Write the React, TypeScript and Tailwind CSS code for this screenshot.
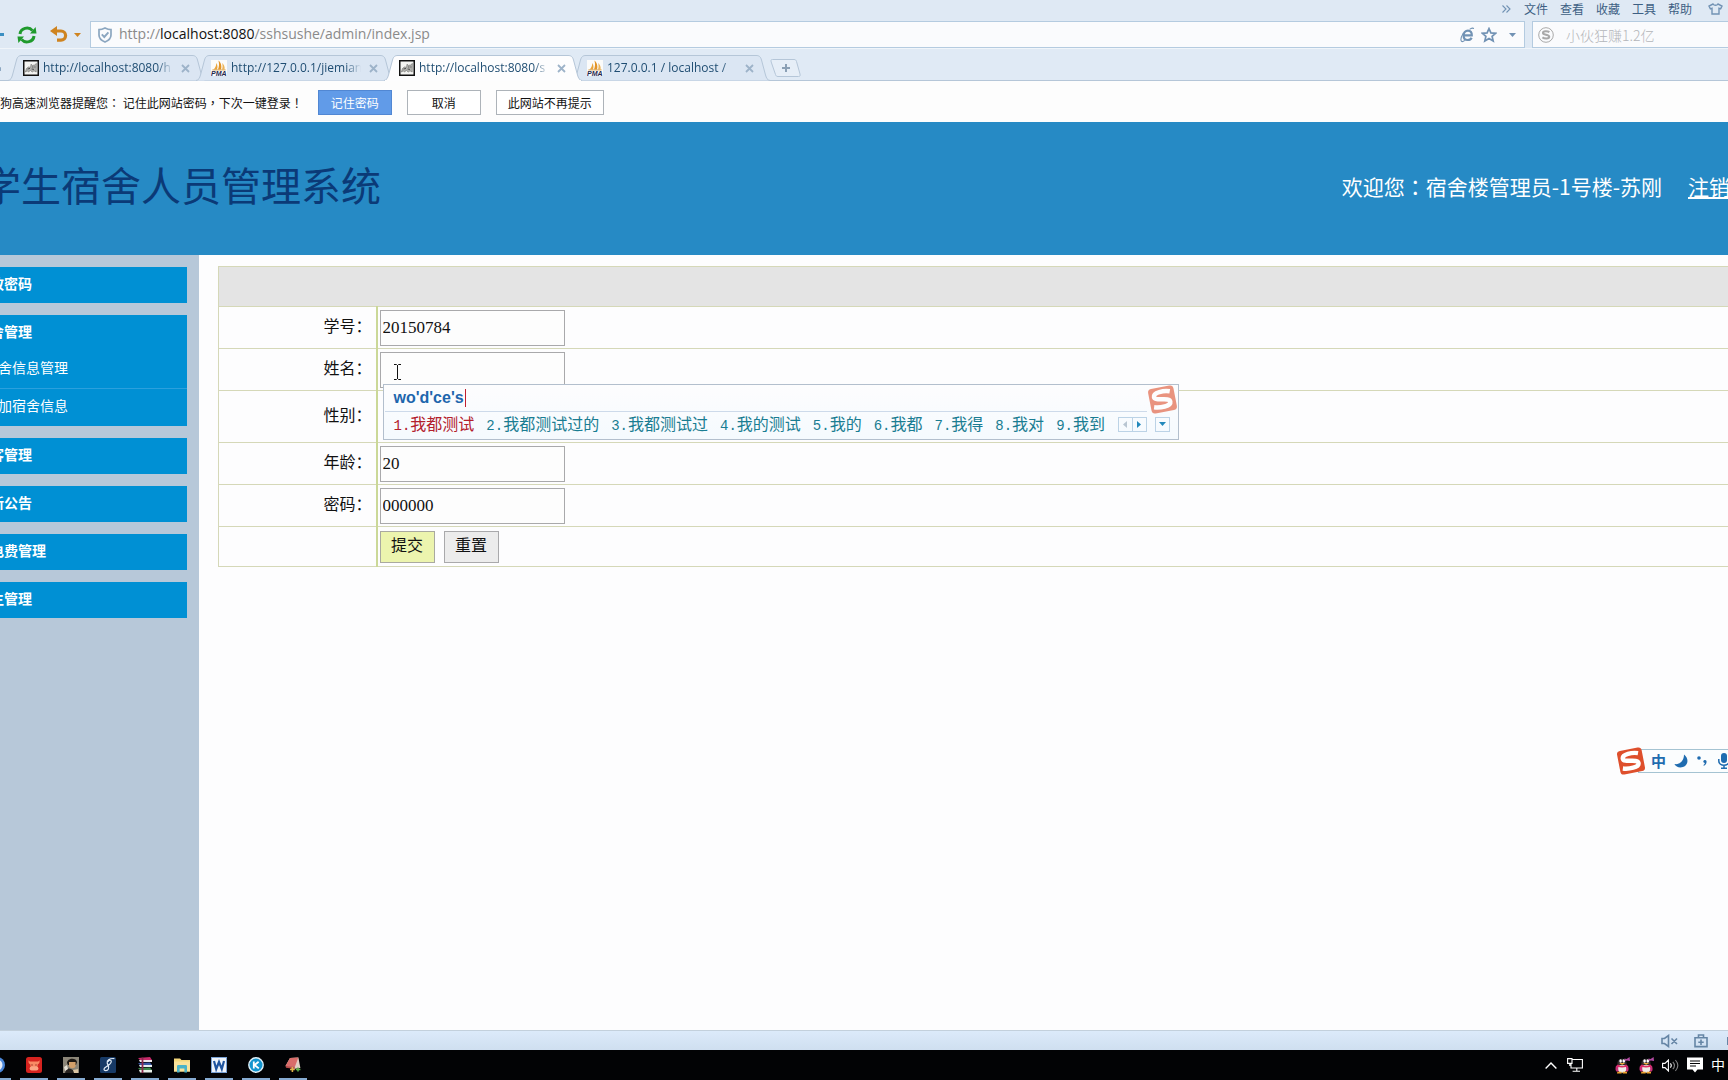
import React from "react";

const SANS = "font-['Open_Sans','Noto_Sans_CJK_SC',sans-serif]";
const CJK = "font-['Noto_Sans_CJK_SC',sans-serif]";

/* Full-width punctuation centred in its square */
const Mid = ({ children }: { children: React.ReactNode }) => (
  <span className="font-['Noto_Sans_CJK_TC',sans-serif]">{children}</span>
);

/* ---------- icons ---------- */

const RefreshIcon = () => (
  <svg width="20" height="18" viewBox="0 0 20 18" fill="none" stroke="#1f9a2c" strokeWidth="3">
    <path d="M3 8 A7 6.5 0 0 1 15.5 4.6" />
    <path d="M17 10 A7 6.5 0 0 1 4.5 13.4" />
    <path d="M13 7.6 L19.5 7.6 L18.6 1 Z" fill="#1f9a2c" stroke="none" />
    <path d="M7 10.4 L0.5 10.4 L1.4 17 Z" fill="#1f9a2c" stroke="none" />
  </svg>
);

const UndoIcon = () => (
  <svg width="18" height="17" viewBox="0 0 18 17" fill="none">
    <path d="M5 5 H11 A4.5 4.5 0 0 1 11 14.2 H7" stroke="#cf8420" strokeWidth="3.2" />
    <path d="M0 5 L7 0 V10 Z" fill="#cf8420" />
  </svg>
);

const ShieldIcon = () => (
  <svg width="14" height="16" viewBox="0 0 14 16" fill="none" stroke="#8ba6c0" strokeWidth="1.7">
    <path d="M7 1 C9 2 11 2.6 13 2.6 V8 C13 11.5 10.5 13.6 7 15 C3.5 13.6 1 11.5 1 8 V2.6 C3 2.6 5 2 7 1 Z" />
    <path d="M3.8 7.4 L6.3 10 L10.4 5.4" strokeWidth="1.9" />
  </svg>
);

const IeIcon = () => (
  <svg width="15" height="16" viewBox="0 0 15 16" fill="none" stroke="#7192b4">
    <path d="M3.6 8.4 H11.8 C12 5.2 10.2 3.6 8 3.6 C5.4 3.6 3.6 5.8 3.6 8.4 C3.6 11.4 5.4 13 7.6 13 C9.6 13 11 12.2 11.6 10.8" strokeWidth="2.2" />
    <path d="M3.4 6 C1.6 9 0.4 12.8 1.4 14.2 C2.1 15 3.6 14.4 4.8 13.4 M9.6 2.4 C11.6 1 13.4 0.6 13.6 2" strokeWidth="1.1" />
  </svg>
);

const StarIcon = () => (
  <svg width="16" height="16" viewBox="0 0 16 16" fill="none" stroke="#7192b4" strokeWidth="1.7" strokeLinejoin="miter">
    <path d="M8 1.6 L9.9 5.9 L14.6 6.3 L11.1 9.4 L12.2 14.1 L8 11.6 L3.8 14.1 L4.9 9.4 L1.4 6.3 L6.1 5.9 Z" />
  </svg>
);

const Caret = ({ className }: { className: string }) => (
  <svg width="7" height="4" viewBox="0 0 7 4" className={className} fill="currentColor">
    <path d="M0 0 H7 L3.5 4 Z" />
  </svg>
);

const SearchLogo = () => (
  <svg width="16" height="16" viewBox="0 0 16 16" fill="none" stroke="#a9a9a9">
    <circle cx="8" cy="8" r="7.3" strokeWidth="1" />
    <path d="M11.4 5.2 C9.6 4 5 3.8 5 6 C5 8.2 11.2 7.4 11.2 9.8 C11.2 12 6.4 11.8 4.4 10.4" strokeWidth="2.1" />
  </svg>
);

const ShirtIcon = () => (
  <svg width="15" height="12" viewBox="0 0 15 12" fill="none" stroke="#7192b4" strokeWidth="1.4">
    <path d="M5 1 C6 2.6 9 2.6 10 1 L14 3 L12.6 5.8 L11 5.2 V11 H4 V5.2 L2.4 5.8 L1 3 Z" />
  </svg>
);

const CatIcon = () => (
  <svg width="16" height="16" viewBox="0 0 16 16">
    <rect x="0.75" y="0.75" width="14.5" height="14.5" fill="#f4f4f2" stroke="#111" strokeWidth="1.5" />
    <path d="M2.4 12 L3.4 8.6 L5.4 7 L7.6 7.4 L8 4.2 L9.4 5.4 L11.6 5 L13.4 3.4 L13.2 12 L11 10.8 L9.2 12 L7.4 10.4 L5.4 12 L4.4 10.8 Z" fill="#b3b3b0" stroke="#6d6d6a" strokeWidth="0.6" />
    <path d="M4.6 9 L7 8.4 M9.2 7 H10.4 M11.4 7 H12.4 M8.6 9 L11 9.4" stroke="#333" strokeWidth="0.8" />
  </svg>
);

const PmaIcon = () => (
  <svg width="16" height="17" viewBox="0 0 16 17">
    <rect width="16" height="16" fill="#fbfbfa" />
    <path d="M2.6 9.4 C4.2 8 5.2 5.6 5.4 3 C6.6 5 6.8 7.4 6 9.4 Z" fill="#e9a43a" />
    <path d="M7 9.4 C8.2 7 8.4 3.4 7.4 0.6 C10 2.4 11 6.4 10 9.4 Z" fill="#e39426" />
    <path d="M11 9.4 C11.8 7.4 11.8 5 11 3 C13 4.4 14 7 13.6 9.4 Z" fill="#edb458" />
    <path d="M1.4 9.9 H14.6" stroke="#d99b3c" strokeWidth="0.9" />
    <text x="0" y="16.4" fontSize="7" fontWeight="700" fontStyle="italic" fontFamily="Liberation Sans" fill="#1f2750">PMA</text>
  </svg>
);

const SogouLogo = ({ size, faded = false }: { size: number; faded?: boolean }) => (
  <svg width={size} height={size} viewBox="0 0 30 30" className={faded ? "opacity-60" : ""}>
    <g transform="rotate(-11 15 15)">
      <rect x="2.5" y="3" width="25" height="24" rx="3.5" fill="#de4f2c" />
      <path d="M23.4 8.6 C18 6.6 7.4 6.4 7.4 11.2 C7.4 15.8 22 13.4 22 18.4 C22 23 11 22.6 5.6 20.8" fill="none" stroke="#fff" strokeWidth="4.4" />
    </g>
  </svg>
);

/* ---------- browser chrome ---------- */

const MENUS = ["文件", "查看", "收藏", "工具", "帮助"];

const MenuRow = () => (
  <nav className={`flex h-[21px] items-center justify-end gap-3 pb-[3px] pr-[5px] text-[12px] leading-[18px] text-[#3d5f83] ${CJK}`}>
    <svg width="9" height="8" viewBox="0 0 9 8" fill="none" stroke="#7192b4" strokeWidth="1.1" className="mr-px">
      <path d="M0.5 0.5 L4 4 L0.5 7.5 M4.5 0.5 L8 4 L4.5 7.5" />
    </svg>
    {MENUS.map((m) => (
      <button key={m} type="button">{m}</button>
    ))}
    <button type="button" aria-label="皮肤" className="ml-1"><ShirtIcon /></button>
  </nav>
);

const AddressRow = () => (
  <div className="flex h-[27px] items-stretch">
    <div className="flex w-[90px] items-center">
      <span className="h-[3px] w-1 bg-[#3c8fc2]" />
      <button type="button" aria-label="刷新" className="ml-[13px]"><RefreshIcon /></button>
      <button type="button" aria-label="撤销" className="ml-[13px]"><UndoIcon /></button>
      <Caret className="ml-1.5 text-[#cf8420]" />
    </div>
    <div className="flex flex-1 items-center border border-[#b4cbe0] bg-[#fafbfd] pl-[7px] pr-2">
      <ShieldIcon />
      <div role="textbox" aria-label="地址" className={`ml-[7px] flex-1 pb-px text-[14px] leading-5 text-[#8a8a8a] ${SANS}`}>
        http://<span className="text-[#111]">localhost:8080</span>/sshsushe/admin/index.jsp
      </div>
      <button type="button" aria-label="兼容模式"><IeIcon /></button>
      <button type="button" aria-label="收藏" className="ml-1.5"><StarIcon /></button>
      <Caret className="ml-3 text-[#7192b4]" />
    </div>
    <div className="ml-[7px] flex w-[196px] items-center border border-r-0 border-[#b4cbe0] bg-[#fafbfd] pl-[5px]">
      <SearchLogo />
      <input
        aria-label="搜索"
        placeholder="小伙狂赚1.2亿"
        className={`ml-3 min-w-0 flex-1 bg-transparent text-[14px] font-light leading-5 outline-none placeholder:text-[#b4b6ba] ${CJK}`}
      />
    </div>
  </div>
);

type TabInfo = { title: string; icon: "cat" | "pma"; active?: boolean };
const TABS: TabInfo[] = [
  { title: "http://localhost:8080/h", icon: "cat" },
  { title: "http://127.0.0.1/jiemian", icon: "pma" },
  { title: "http://localhost:8080/s", icon: "cat", active: true },
  { title: "127.0.0.1 / localhost /", icon: "pma" },
];

const Tab = ({ title, icon, active }: TabInfo) => (
  <div className={`relative -ml-2.5 flex h-[26px] w-[198px] items-center pl-[15px] ${active ? "z-10" : ""}`}>
    <svg width="198" height="26" viewBox="0 0 198 26" className="absolute inset-0">
      <path
        d="M0 25.5 C3 25 3.5 23 4.5 20 L8.5 5 C9.5 1.5 11 0.5 14 0.5 H184 C187 0.5 188.5 1.5 189.5 5 L193.5 20 C194.5 23 195 25 198 25.5"
        fill={active ? "#fdfdfe" : "#dbe6f3"}
        stroke="#b5c6d8"
      />
      {active && <path d="M1 25.5 H197" stroke="#fdfdfe" />}
    </svg>
    <button type="button" className="relative flex items-center gap-1">
      {icon === "cat" ? <CatIcon /> : <PmaIcon />}
      <span className={`w-[130px] whitespace-nowrap text-left text-[12px] leading-5 text-[#1f4d72] [mask-image:linear-gradient(to_right,black_88%,transparent)] ${SANS}`}>
        {title}
      </span>
    </button>
    <button type="button" aria-label="关闭标签" className="relative ml-2">
      <svg width="9" height="9" viewBox="0 0 9 9" stroke="#9db3c9" strokeWidth="1.8">
        <path d="M1 1 L8 8 M8 1 L1 8" />
      </svg>
    </button>
  </div>
);

const TabStrip = () => (
  <div className="flex h-[33px] items-end border-b border-t border-b-[#b5c6d8] border-t-[#f0f5fa] bg-[#e0eaf5]">
    <span className="mb-[9px] h-1 w-px rounded-full bg-[#8ba6c0]" />
    <div className="-mb-px flex pl-[17px]">
      {TABS.map((t, i) => (
        <Tab key={i} {...t} />
      ))}
    </div>
    <button type="button" aria-label="新建标签" className="mb-[3px]">
      <svg width="31" height="18" viewBox="0 0 31 18" fill="#e6eef7">
        <path d="M2.5 0.5 H24 C25.5 0.5 26 1 26.5 2.5 L30 15 C30.4 17 30 17.5 28.5 17.5 H8 C6.5 17.5 6 17 5.5 15.5 L1.2 3 C0.6 1.2 1 0.5 2.5 0.5 Z" stroke="#b5c6d8" />
        <path d="M12 9 H20 M16 5 V13" stroke="#8ba0b5" strokeWidth="2" />
      </svg>
    </button>
  </div>
);

const NoticeBar = () => (
  <div className={`flex h-[41px] items-center overflow-hidden bg-[#fdfdfd] pt-0.5 text-[12px] leading-5 text-[#111] ${CJK}`}>
    <p className="-ml-3 whitespace-pre">
      搜狗高速浏览器提醒您<Mid>：</Mid> 记住此网站密码<Mid>，</Mid>下次一键登录<Mid>！</Mid>
    </p>
    <button type="button" className="ml-[15px] h-[25px] w-[74px] border border-[#5187d3] bg-[#619be8] text-white">记住密码</button>
    <button type="button" className="ml-[15px] h-[25px] w-[74px] border border-[#adb3b9] bg-white">取消</button>
    <button type="button" className="ml-[15px] h-[25px] w-[108px] border border-[#adb3b9] bg-white">此网站不再提示</button>
  </div>
);

/* ---------- page ---------- */

const PageHeader = () => (
  <header className={`flex h-[133px] items-center justify-between overflow-hidden bg-[#268ac5] pb-1.5 ${CJK}`}>
    <h1 className="-ml-[19px] whitespace-nowrap pb-1 text-[40px] font-normal leading-[48px] text-[#0b3a77]">学生宿舍人员管理系统</h1>
    <div className="-mr-0.5 flex gap-[26px] whitespace-nowrap text-[21px] font-normal leading-8 text-white">
      <span>欢迎您<Mid>：</Mid>宿舍楼管理员-1号楼-苏刚</span>
      <a href="#logout" className="underline underline-offset-2">注销</a>
    </div>
  </header>
);

const NAV: { title: string; items?: string[] }[] = [
  { title: "修改密码" },
  { title: "宿舍管理", items: ["宿舍信息管理", "添加宿舍信息"] },
  { title: "访客管理" },
  { title: "最新公告" },
  { title: "水电费管理" },
  { title: "卫生管理" },
];

const Sidebar = () => (
  <aside className={`flex w-[199px] shrink-0 flex-col gap-3 overflow-hidden bg-[#b7c8d9] pr-3 pt-3 text-[14px] text-white ${CJK}`}>
    {NAV.map((g) => (
      <section key={g.title} className="overflow-hidden bg-[#0090d4]">
        <h2 className="-ml-6 h-9 font-bold leading-8">{g.title}</h2>
        {g.items && (
          <ul>
            {g.items.map((s) => (
              <li key={s} className="border-t border-[#2ba0dd] first:border-t-0">
                <a href="#nav" className="-ml-4 block h-[37px] leading-8">{s}</a>
              </li>
            ))}
          </ul>
        )}
      </section>
    ))}
  </aside>
);

const CANDIDATES = ["我都测试", "我都测试过的", "我都测试过", "我的测试", "我的", "我都", "我得", "我对", "我到"];

const ImePopup = () => (
  <div className="absolute left-[3px] top-8 z-20 w-[796px] border border-[#b3bfcd] bg-gradient-to-b from-[#fdfdfe] to-[#f5fafe]">
    <div className="ml-px mr-[31px] flex h-[27px] items-center border-b border-[#cddaea] pl-[9px]">
      <span className="font-['Liberation_Sans',sans-serif] text-[16px] font-bold leading-5 text-[#1e66ad]">wo'd'ce's</span>
      <span className="ml-px h-[18px] w-px bg-[#c02030]" />
    </div>
    <div className={`flex h-[27px] items-center pb-0.5 pl-2.5 text-[16px] leading-6 text-[#1a7d92] ${CJK}`}>
      <ol className="flex gap-3 whitespace-nowrap">
        {CANDIDATES.map((c, i) => (
          <li key={i} className={i === 0 ? "text-[#b3202c]" : ""}>
            <span className="font-['Liberation_Mono',monospace] text-[14px]">{i + 1}.</span>
            {c}
          </li>
        ))}
      </ol>
      <div className="ml-[13px] flex text-[#2288bb]">
        <button type="button" aria-label="上一页" className="flex h-[15px] w-[15px] items-center justify-center border border-[#bcd3e6] text-[#b9c6d2]">
          <svg width="4" height="7" viewBox="0 0 4 7" fill="currentColor"><path d="M4 0 V7 L0 3.5 Z" /></svg>
        </button>
        <button type="button" aria-label="下一页" className="-ml-px flex h-[15px] w-[15px] items-center justify-center border border-[#bcd3e6]">
          <svg width="4" height="7" viewBox="0 0 4 7" fill="currentColor"><path d="M0 0 V7 L4 3.5 Z" /></svg>
        </button>
        <button type="button" aria-label="更多" className="ml-2 flex h-[15px] w-[15px] items-center justify-center border border-[#bcd3e6]">
          <Caret className="" />
        </button>
      </div>
    </div>
    <div className="absolute -top-px right-0"><SogouLogo size={31} faded /></div>
  </div>
);

const IBeam = () => (
  <svg width="7" height="16" viewBox="0 0 7 16" fill="none" stroke="#111" className="absolute left-3.5 top-3">
    <path d="M0 0.5 H2.5 L3.5 1.5 L4.5 0.5 H7 M3.5 1 V15 M0 15.5 H2.5 L3.5 14.5 L4.5 15.5 H7" />
  </svg>
);

const FIELD = "h-9 w-[185px] border border-[#a9a9ab] bg-[#fdfdfd] px-0.5 font-['Liberation_Serif',serif] text-[17px] text-[#111] outline-none";
const LABEL_CELL = "w-[158px] border border-[#d5d8b8] border-r-2 border-r-[#cbd898] pb-1.5 pr-1 text-right";
const VALUE_CELL = "border border-[#d5d8b8] pl-0.5";

const Field = ({ id, label, value, children }: { id: string; label: string; value: string; children?: React.ReactNode }) => (
  <tr className="h-[42px]">
    <td className={LABEL_CELL}><label htmlFor={id}>{label}：</label></td>
    <td className={VALUE_CELL}>
      <div className="relative flex">
        <input id={id} type="text" defaultValue={value} className={FIELD} />
        {children}
      </div>
    </td>
  </tr>
);

const StudentForm = () => (
  <form className="min-w-0 flex-1 overflow-hidden bg-[#fdfdfe] pl-[19px] pt-[11px]">
    <table className={`w-[calc(100%+8px)] border-collapse text-[16px] leading-6 text-[#111] ${CJK}`}>
      <tbody>
        <tr className="h-[40px]">
          <td colSpan={2} className="border border-[#d5d8b8] bg-[#e4e4e4]" />
        </tr>
        <Field id="sno" label="学号" value="20150784" />
        <Field id="sname" label="姓名" value="">
          <IBeam />
          <ImePopup />
        </Field>
        <tr className="h-[52px]">
          <td className={LABEL_CELL}>性别：</td>
          <td className={VALUE_CELL} />
        </tr>
        <Field id="age" label="年龄" value="20" />
        <Field id="pwd" label="密码" value="000000" />
        <tr className="h-[40px]">
          <td className={LABEL_CELL} />
          <td className={VALUE_CELL}>
            <div className="flex gap-[9px]">
              <button type="button" className="h-8 w-[55px] border border-[#a9a9a0] bg-[#ecf4ae] pb-1.5">提交</button>
              <button type="reset" className="h-8 w-[55px] border border-[#a9a9ab] bg-[#ececec] pb-1.5">重置</button>
            </div>
          </td>
        </tr>
      </tbody>
    </table>
  </form>
);

const ImeBar = () => (
  <div className="absolute right-0 top-[492px] flex h-7 items-center">
    <div className="relative z-10"><SogouLogo size={30} /></div>
    <div className="-ml-2 flex h-6 w-[90px] items-center overflow-hidden border border-r-0 border-[#a5c3d2] bg-[#fbfdfe] pl-3 text-[#1f6cb0]">
      <span className={`text-[15px] font-bold leading-5 ${CJK}`}>中</span>
      <svg width="14" height="14" viewBox="0 0 14 14" fill="currentColor" className="ml-2 shrink-0">
        <path d="M10 0.5 C15 4.5 14.5 11 9 13 C5.5 14.2 2 13 0.4 10 C6 11 10 6.5 10 0.5 Z" />
      </svg>
      <svg width="10" height="10" viewBox="0 0 10 10" fill="currentColor" className="ml-[9px] shrink-0">
        <circle cx="2" cy="2" r="1.8" />
        <path d="M6.4 5 A1.7 1.7 0 0 1 9.6 5.6 C9.6 7.6 8.6 9 6.8 9.8 L6.4 9 C7.4 8.4 7.8 7.8 7.8 7 C6.8 7 6 6.2 6.4 5 Z" />
      </svg>
      <svg width="12" height="16" viewBox="0 0 12 16" fill="currentColor" className="ml-[11px] shrink-0">
        <rect x="3" y="0" width="6" height="10" rx="3" />
        <path d="M0.8 6 V8 C0.8 13.6 11.2 13.6 11.2 8 V6 M6 12 V15 M3 15.2 H9" fill="none" stroke="currentColor" strokeWidth="1.5" />
      </svg>
    </div>
  </div>
);

/* ---------- bottom bars ---------- */

const StatusBar = () => (
  <footer className="flex h-5 items-center justify-end gap-4 border-t border-[#c3d0dc] bg-gradient-to-b from-[#dceafa] to-[#cfdff0] text-[#6585a5]">
    <svg width="17" height="14" viewBox="0 0 17 14" fill="none" stroke="currentColor" strokeWidth="1.6">
      <path d="M1 4.5 H3.5 L7.5 1.5 V12.5 L3.5 9.5 H1 Z M10.5 4.5 L16 10 M16 4.5 L10.5 10" />
    </svg>
    <svg width="14" height="14" viewBox="0 0 14 14" fill="none" stroke="currentColor" strokeWidth="1.6">
      <path d="M1 3.8 H13 V12.6 H1 Z M4.5 3.5 V1 H9.5 V3.5 M7 5.6 V11 M4.3 8.3 H9.7" />
    </svg>
    <span className="ml-[3px] h-2 w-px bg-[#6585a5]" />
  </footer>
);

const TASKS = [
  { name: "浏览器", icon: <><circle cx="8" cy="8" r="8" fill="#4a86d8" /><circle cx="8" cy="8" r="5.5" fill="#e8eef8" /></> },
  {
    name: "红牛",
    icon: (
      <>
        <rect width="16" height="16" rx="2.5" fill="#d6231f" />
        <path d="M2.6 3 C3 4.8 4.4 4.6 5.4 4.6 H10.6 C11.6 4.6 13 4.8 13.4 3 C14 5.8 13 7 11.8 7.2 L11 12 H5 L4.2 7.2 C3 7 2 5.8 2.6 3 Z" fill="#f98a64" />
        <rect x="3.6" y="9.6" width="8.8" height="4" rx="2" fill="#fba584" />
        <path d="M6 7.4 V8.6 M10 7.4 V8.6" stroke="#7d1714" strokeWidth="1" />
      </>
    ),
  },
  {
    name: "头像",
    icon: (
      <>
        <rect width="16" height="16" fill="#8c8678" />
        <path d="M4 6 C4 1 13 0 14 5 L13 8 H5 Z" fill="#1c1712" />
        <path d="M6 5 H12.6 V9 C12 12 7 12 6 9 Z" fill="#d3a06a" />
        <path d="M2 16 C3 11 6 11 8 12 L15 16 Z" fill="#272320" />
        <path d="M1 10 L4 8 L5 12 L2 14 Z" fill="#e6e1d5" />
        <path d="M10 13 L15 12 V16 H11 Z" fill="#d9c4a2" />
      </>
    ),
  },
  {
    name: "数据库",
    icon: (
      <>
        <rect width="16" height="16" rx="1.5" fill="#173a66" />
        <path d="M14.4 1.6 C10 1 6.6 3.4 7.2 6 C7.8 8.4 9.6 9.6 8.4 12 C7.4 14 4 14.2 4 12 C4 9.8 10.6 8.4 11.2 5 C11.6 2.6 9 2.8 8 4.6" fill="none" stroke="#e2ecf6" strokeWidth="1.2" />
      </>
    ),
  },
  {
    name: "压缩",
    icon: (
      <>
        <path d="M1 1 L13 0 L15 3 H3 Z" fill="#c62a6a" /><path d="M2 3 H15 V5 H3 Z" fill="#f1e9ee" />
        <path d="M1 6 L13 5.4 L15 8 H3 Z" fill="#3a57a6" /><path d="M2 8 H15 V10 H3 Z" fill="#e7eef3" />
        <path d="M1 11 L13 10.4 L15 13 H3 Z" fill="#3c8a4c" /><path d="M2 13 H15 V15.4 H3 Z" fill="#e9f1ea" />
        <path d="M4.6 0.6 H6.4 V16 H4.6 Z" fill="#8b2a4c" />
      </>
    ),
  },
  {
    name: "资源管理器",
    icon: (
      <>
        <path d="M0 1.5 H6 L7.5 3 H16 V14.5 H0 Z" fill="#f4d77c" />
        <path d="M0 4.5 H16 V14.5 H0 Z" fill="#f9e29b" />
        <path d="M3 15.6 V9.6 C3 8.4 3.6 8 4.6 8 H11.4 C12.4 8 13 8.4 13 9.6 V15.6 H10.4 V11.6 H5.6 V15.6 Z" fill="#49b3c9" />
      </>
    ),
  },
  {
    name: "文档",
    icon: (
      <>
        <rect x="0.5" y="0.5" width="15" height="15" fill="#eef4fb" stroke="#7ba3d6" />
        <path d="M3 4 L5.2 12 L8 5 L10.8 12 L13 4" fill="none" stroke="#1f55a0" strokeWidth="2.2" />
      </>
    ),
  },
  {
    name: "音乐",
    icon: (
      <>
        <circle cx="8" cy="8" r="7.2" fill="#1395cf" stroke="#dff1fa" strokeWidth="1.4" />
        <path d="M5.8 4.6 V11.4 M10.6 4.8 L6.6 8 L10.8 11.4" fill="none" stroke="#fff" strokeWidth="1.8" />
      </>
    ),
  },
  {
    name: "工具",
    icon: (
      <>
        <path d="M5 1 L13.4 0.6 L15.4 11 L8 12 L0.5 9 Z" fill="#e3cfc4" />
        <path d="M5 1 L13.4 0.6 L10 9.4 L0.5 9 Z" fill="#d96d6a" />
        <path d="M0.5 9 L10 9.4 L9.4 12 L1 10.8 Z" fill="#b84a4a" />
        <path d="M7.4 10 V15 M5 12.5 H9.8" stroke="#e2b34a" strokeWidth="1.6" /><path d="M13 10.4 V14.6 M10.8 12.5 H15.4" stroke="#5db04c" strokeWidth="1.6" />
      </>
    ),
  },
];

const Penguin = () => (
  <svg width="16" height="17" viewBox="0 0 16 17">
    <path d="M1 9 C0 12 0.6 14.6 2.4 14.6 L12 14.6 C13.6 14.6 14 12 13 9 L10 7 H4 Z" fill="#c92f78" />
    <ellipse cx="7.2" cy="11.8" rx="4" ry="4" fill="#f1ece9" />
    <path d="M2.4 7 C1.6 0 12.4 0 11.6 7 C10 8.6 4 8.6 2.4 7 Z" fill="#2f2a2c" />
    <ellipse cx="5.6" cy="4" rx="1.3" ry="1.7" fill="#fff" /><ellipse cx="8.8" cy="4" rx="1.3" ry="1.7" fill="#fff" />
    <path d="M4 6 H10.4 L7.2 7.8 Z" fill="#f3b23c" />
    <path d="M2 7.6 C5 9.4 9 9.4 12 7.6 L11.6 9.8 C9 10.8 5 10.8 2.4 9.8 Z" fill="#dc2c62" />
    <path d="M9.4 1.6 L11.6 2 L14.6 0 L15 4 L12 3.4 L10 4 Z" fill="#b04aa0" />
    <path d="M2.4 14.8 H6.6 V16.6 H2 Z M7.8 14.8 H12 V16.6 H7.8 Z" fill="#f0a32e" />
  </svg>
);

const Taskbar = () => (
  <div className="flex h-[30px] justify-between overflow-hidden bg-[#020305]">
    <div className="-ml-[22px] flex">
      {TASKS.map((t) => (
        <button key={t.name} type="button" aria-label={t.name} className="flex w-[37px] flex-col items-center justify-between pt-[7px]">
          <svg width="16" height="16" viewBox="0 0 16 16">{t.icon}</svg>
          <span className="h-0.5 w-7 bg-[#86abd2]" />
        </button>
      ))}
    </div>
    <div className="flex items-center pr-[3px] text-white">
      <svg width="12" height="7" viewBox="0 0 12 7" fill="none" stroke="currentColor" strokeWidth="1.4"><path d="M0.6 6.4 L6 1 L11.4 6.4" /></svg>
      <svg width="16" height="14" viewBox="0 0 16 14" fill="none" stroke="currentColor" strokeWidth="1.1" className="ml-2.5">
        <path d="M5 1.5 H15.4 V10 H4 V6 M0.6 0.6 H5 V5.4 H0.6 Z M2.8 5.4 V8 M9.8 10 V13 M5.6 13.2 H13" />
      </svg>
      <span className="ml-8"><Penguin /></span>
      <span className="ml-2"><Penguin /></span>
      <svg width="17" height="13" viewBox="0 0 17 13" fill="none" stroke="currentColor" strokeWidth="1.1" className="ml-[7px]">
        <path d="M0.6 4.4 H3 L6.4 1 V12 L3 8.6 H0.6 Z M8.4 4.4 C9.4 5.6 9.4 7.4 8.4 8.6" />
        <path d="M10.8 2.8 C12.8 5 12.8 8 10.8 10.2 M13.4 1 C16.4 4.4 16.4 8.6 13.4 12" opacity="0.5" />
      </svg>
      <svg width="16" height="16" viewBox="0 0 16 16" className="ml-2">
        <path d="M0 0.5 H16 V12.5 H10.5 L8 15.5 L5.5 12.5 H0 Z" fill="#fff" />
        <path d="M3 4 H13 M3 6.5 H13 M3 9 H9" stroke="#020305" strokeWidth="1.1" />
      </svg>
      <span className={`ml-2 pb-0.5 text-[14px] leading-5 ${CJK}`}>中</span>
    </div>
  </div>
);

export default function App() {
  return (
    <div className="flex h-screen flex-col overflow-hidden bg-[#dfe9f4]">
      <MenuRow />
      <AddressRow />
      <TabStrip />
      <NoticeBar />
      <PageHeader />
      <main className="relative flex min-h-0 flex-1">
        <Sidebar />
        <StudentForm />
        <ImeBar />
      </main>
      <StatusBar />
      <Taskbar />
    </div>
  );
}
